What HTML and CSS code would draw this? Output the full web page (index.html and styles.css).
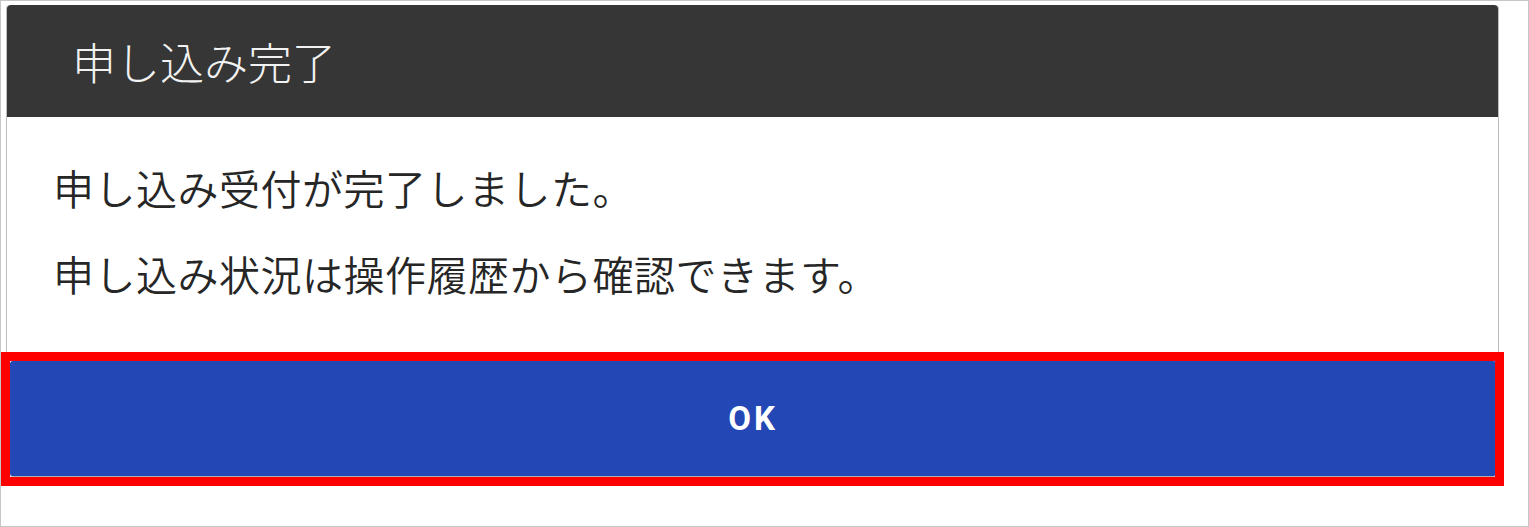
FILE: index.html
```html
<!DOCTYPE html>
<html lang="ja">
<head>
<meta charset="utf-8">
<title>申し込み完了</title>
<link rel="stylesheet" href="styles.css">
</head>
<body>
<div class="frame">
  <div class="dialog">
    <div class="dialog-header">
      <h1 class="dialog-title">申し込み完了</h1>
    </div>
    <div class="dialog-body">
      <p class="msg">申し込み受付が完了しました。</p>
      <p class="msg">申し込み状況は操作履歴から確認できます。</p>
    </div>
    <div class="dialog-footer">
      <button class="ok-btn" type="button">OK</button>
    </div>
  </div>
  <div class="highlight"></div>
</div>
</body>
</html>
```

FILE: styles.css
```css
html, body {
  margin: 0;
  padding: 0;
  background: #ffffff;
}

.frame {
  position: relative;
  width: 1529px;
  height: 527px;
  box-sizing: border-box;
  border: 1px solid #c6c6c6;
  padding: 4px 0 0 5px;
  background: #ffffff;
  font-family: "Noto Sans CJK JP", "Noto Sans", sans-serif;
}

.dialog {
  width: 1493px;
  box-sizing: border-box;
  border-left: 1px solid #bdbdbd;
  border-right: 1px solid #bdbdbd;
  border-radius: 4px 4px 0 0;
  background: #ffffff;
}

.dialog-header {
  height: 112px;
  background: #363636;
  border-radius: 4px 4px 0 0;
  padding-left: 65px;
}

.dialog-title {
  margin: 0;
  font-size: 44px;
  line-height: 112px;
  font-weight: 300;
  color: #f2f2f2;
}

.dialog-body {
  padding: 46px 0 54px 46px;
  display: flex;
  flex-direction: column;
  gap: 38px;
}

.msg {
  margin: 0;
  font-size: 41px;
  line-height: 48px;
  font-weight: 350;
  letter-spacing: 0.5px;
  color: #262626;
}

.dialog-footer {
  padding: 10px 2px 3px 3px;
}

.ok-btn {
  display: block;
  width: 100%;
  height: 115px;
  border: 0;
  border-radius: 3px;
  background: #2347b5;
  box-shadow: 0 1px 1px rgba(0, 0, 0, 0.35);
  color: #ffffff;
  font-family: Roboto, "Noto Sans", sans-serif;
  font-weight: 700;
  font-size: 33px;
  letter-spacing: 3px;
  padding: 0;
}

.highlight {
  position: absolute;
  left: 0;
  top: 351px;
  width: 1503px;
  height: 134px;
  box-sizing: border-box;
  border: 9px solid #ff0000;
  pointer-events: none;
}
```
